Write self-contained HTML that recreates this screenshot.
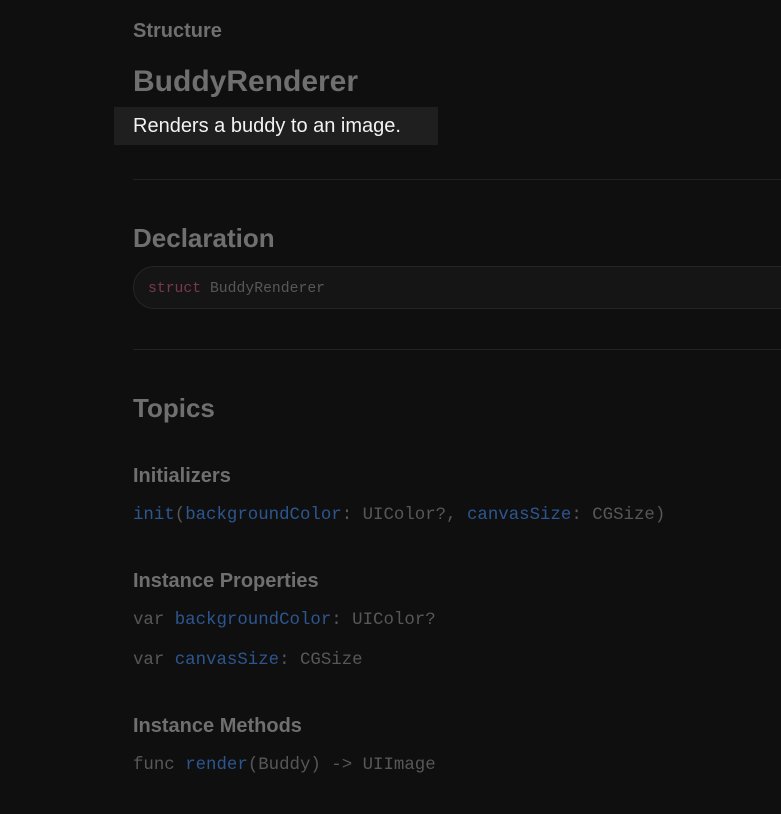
<!DOCTYPE html>
<html><head><style>
body{margin:0;background:#0f0f10;width:781px;height:814px;overflow:hidden;font-family:"Liberation Sans",sans-serif;position:relative}
.a{position:absolute;white-space:nowrap}
.g{color:#6f6f6f;font-weight:bold}
.m{font-family:"Liberation Mono",monospace;color:#575757;font-size:17.4px}
.b{color:#2d568f}
hr{position:absolute;left:133px;right:0;border:0;border-top:1px solid #222;margin:0}
</style></head><body>
<div class="a g" style="left:133px;top:20px;font-size:20px">Structure</div>
<div class="a g" style="left:133px;top:65px;font-size:30px">BuddyRenderer</div>
<div class="a" style="left:114px;top:107px;width:324px;height:38px;background:#1f1f1f"></div>
<div class="a" style="left:133px;top:115px;font-size:20px;color:#f2f2f2">Renders a buddy to an image.</div>
<hr style="top:179px">
<div class="a g" style="left:133px;top:223px;font-size:26px">Declaration</div>
<div class="a" style="left:133px;top:266px;width:700px;height:43px;border:1px solid #252527;border-radius:21px;background:#151516;box-sizing:border-box"></div>
<div class="a m" style="left:148px;top:281px;font-size:14.75px"><span style="color:#7a3850">struct</span> BuddyRenderer</div>
<hr style="top:349px">
<div class="a g" style="left:133px;top:393px;font-size:26px">Topics</div>
<div class="a g" style="left:133px;top:465px;font-size:20px">Initializers</div>
<div class="a m" style="left:133px;top:506px"><span class="b">init</span>(<span class="b">backgroundColor</span>: UIColor?, <span class="b">canvasSize</span>: CGSize)</div>
<div class="a g" style="left:133px;top:570px;font-size:20px">Instance Properties</div>
<div class="a m" style="left:133px;top:611px">var <span class="b">backgroundColor</span>: UIColor?</div>
<div class="a m" style="left:133px;top:651px">var <span class="b">canvasSize</span>: CGSize</div>
<div class="a g" style="left:133px;top:715px;font-size:20px">Instance Methods</div>
<div class="a m" style="left:133px;top:756px">func <span class="b">render</span>(Buddy) -&gt; UIImage</div>
</body></html>
